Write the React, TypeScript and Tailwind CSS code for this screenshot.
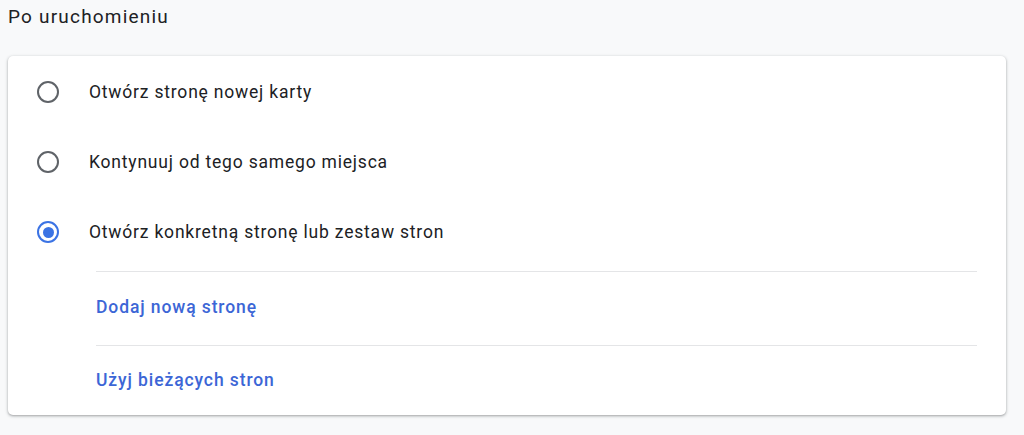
import { useState } from 'react';

const OPTIONS = [
  'Otwórz stronę nowej karty',
  'Kontynuuj od tego samego miejsca',
  'Otwórz konkretną stronę lub zestaw stron',
];

function Radio({ checked }: { checked: boolean }) {
  return (
    <span
      className={`flex h-[22px] w-[22px] shrink-0 items-center justify-center rounded-full border-[2.5px] ${
        checked ? 'border-[#3b73e4]' : 'border-[#5f6368]'
      }`}
    >
      {checked && <span className="h-[11px] w-[11px] rounded-full bg-[#3b73e4]" />}
    </span>
  );
}

export default function App() {
  const [selected, setSelected] = useState(2);

  return (
    <div
      className="h-[435px] w-full bg-[#f8f9fa] px-2 text-[#202124]"
      style={{ fontFamily: 'Roboto, "Noto Sans", sans-serif' }}
    >
      <h2 className="h-[56px] text-[19px] leading-[34px] font-normal tracking-[1.2px]">Po uruchomieniu</h2>

      <div className="mr-[10px] rounded-[5px] bg-white shadow-[0_1px_2px_rgba(60,64,67,0.3),0_1px_3px_1px_rgba(60,64,67,0.15)]">
        <div className="pt-[1px]">
          {OPTIONS.map((label, i) => (
            <button
              key={label}
              onClick={() => setSelected(i)}
              className="flex h-[70px] w-full items-center gap-[30px] pl-[29px] text-left"
            >
              <Radio checked={selected === i} />
              <span className="text-[17.5px] tracking-[0.8px]">{label}</span>
            </button>
          ))}
        </div>

        {/* Page list actions */}
        <div className="ml-[88px] mr-[29px] mt-[4px]">
          <div className="flex h-[74px] items-center border-t border-[#e4e5e7] pb-[2px]">
            <span className="text-[17.5px] font-medium tracking-[0.9px] text-[#3c66d6]">Dodaj nową stronę</span>
          </div>
          <div className="flex h-[70px] items-center border-t border-[#e4e5e7]">
            <span className="text-[17.5px] font-medium tracking-[0.9px] text-[#3c66d6]">Użyj bieżących stron</span>
          </div>
        </div>
      </div>
    </div>
  );
}
